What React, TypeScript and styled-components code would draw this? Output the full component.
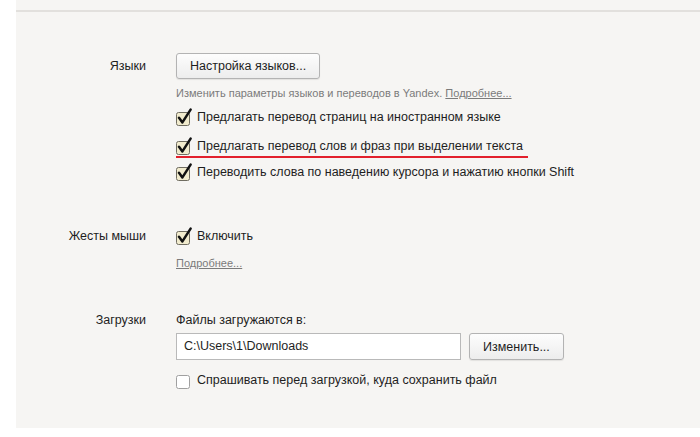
import React from 'react';
import styled, { createGlobalStyle } from 'styled-components';

const GlobalStyle = createGlobalStyle`
    html, body {
        margin: 0;
        padding: 0;
        background: #ffffff;
    }
    body {
        font-family: "Liberation Sans", Arial, sans-serif;
        font-size: 12.5px;
        color: #1e1e1e;
    }
`;

const Page = styled.div`
    width: 700px;
    height: 437px;
    background: #ffffff;
    overflow: hidden;
`;

const Panel = styled.div`
    margin-left: 16px;
    height: 428px;
    background: #f6f5f3;
    padding-top: 10px;
    box-sizing: border-box;
`;

const Rule = styled.div`
    height: 2px;
    background: #e2e0dd;
`;

const Sections = styled.div`
    display: flex;
    flex-direction: column;
    padding-top: 41px;
`;

const Section = styled.section<{ $gap?: number }>`
    display: grid;
    grid-template-columns: 130px 1fr;
    column-gap: 30px;
    margin-top: ${(p) => p.$gap ?? 0}px;
`;

const Label = styled.div<{ $height: number }>`
    text-align: right;
    line-height: ${(p) => p.$height}px;
    height: ${(p) => p.$height}px;
    color: #1e1e1e;
`;

const Content = styled.div`
    display: flex;
    flex-direction: column;
    align-items: flex-start;
`;

const Button = styled.button<{ $height?: number }>`
    height: ${(p) => p.$height ?? 26}px;
    padding: 0 13px;
    font-family: inherit;
    font-size: 12.5px;
    color: #1e1e1e;
    background: linear-gradient(#fdfdfd, #ededed);
    border: 1px solid #b3b3b3;
    border-radius: 3px;
    box-shadow: 0 1px 1px rgba(0, 0, 0, 0.08);
`;

const Hint = styled.div`
    margin-top: 7px;
    font-size: 11px;
    line-height: 14px;
    color: #7b7b7b;
`;

const MoreLink = styled.a<{ $gap?: number }>`
    font-size: 11px;
    line-height: 14px;
    color: #7b7b7b;
    text-decoration: underline;
    margin-top: ${(p) => p.$gap ?? 0}px;
`;

const CheckList = styled.div<{ $gap?: number }>`
    display: flex;
    flex-direction: column;
    gap: 7px;
    margin-top: ${(p) => p.$gap ?? 0}px;
`;

const CheckRow = styled.label<{ $marked?: boolean }>`
    display: flex;
    align-items: center;
    gap: 5px;
    height: 20px;
    width: fit-content;
    padding-right: ${(p) => (p.$marked ? 5 : 0)}px;
    border-bottom: ${(p) => (p.$marked ? '2px solid #e2202c' : 'none')};
    margin: ${(p) => (p.$marked ? '2px 0 -3px' : '0')};
    color: #1e1e1e;
`;

const Caption = styled.div`
    line-height: 20px;
`;

const PathRow = styled.div`
    display: flex;
    gap: 8px;
    margin-top: 3px;
`;

const PathInput = styled.div`
    width: 276px;
    height: 25px;
    line-height: 25px;
    padding-left: 7px;
    background: #ffffff;
    border: 1px solid #b9b9b9;
    color: #1e1e1e;
`;

const Check: React.FC<{ checked?: boolean }> = ({ checked }) => (
    <svg width="16" height="18" viewBox="0 0 16 18">
        <rect
            x="0.5"
            y="4.5"
            width="13"
            height="13"
            rx="2"
            fill={checked ? '#f1ebcd' : '#ffffff'}
            stroke={checked ? '#6f6c60' : '#a0a0a0'}
        />
        {checked && (
            <path
                d="M3 9.8 L6.4 14.4 L14.6 1.6"
                fill="none"
                stroke="#111111"
                strokeWidth="2.5"
                strokeLinecap="round"
                strokeLinejoin="round"
            />
        )}
    </svg>
);

export default function App() {
    return (
        <Page>
            <GlobalStyle />
            <Panel>
                <Rule />
                <Sections>
                    <Section>
                        <Label $height={26}>Языки</Label>
                        <Content>
                            <Button>Настройка языков...</Button>
                            <Hint>
                                Изменить параметры языков и переводов в Yandex.{' '}
                                <MoreLink>Подробнее...</MoreLink>
                            </Hint>
                            <CheckList $gap={7}>
                                <CheckRow>
                                    <Check checked />
                                    <Caption>Предлагать перевод страниц на иностранном языке</Caption>
                                </CheckRow>
                                <CheckRow $marked>
                                    <Check checked />
                                    <Caption>Предлагать перевод слов и фраз при выделении текста</Caption>
                                </CheckRow>
                                <CheckRow>
                                    <Check checked />
                                    <Caption>Переводить слова по наведению курсора и нажатию кнопки Shift</Caption>
                                </CheckRow>
                            </CheckList>
                        </Content>
                    </Section>
                    <Section $gap={44}>
                        <Label $height={20}>Жесты мыши</Label>
                        <Content>
                            <CheckRow>
                                <Check checked />
                                <Caption>Включить</Caption>
                            </CheckRow>
                            <MoreLink $gap={10}>Подробнее...</MoreLink>
                        </Content>
                    </Section>
                    <Section $gap={40}>
                        <Label $height={20}>Загрузки</Label>
                        <Content>
                            <Caption>Файлы загружаются в:</Caption>
                            <PathRow>
                                <PathInput>C:\Users\1\Downloads</PathInput>
                                <Button $height={27}>Изменить...</Button>
                            </PathRow>
                            <CheckList $gap={10}>
                                <CheckRow>
                                    <Check />
                                    <Caption>Спрашивать перед загрузкой, куда сохранить файл</Caption>
                                </CheckRow>
                            </CheckList>
                        </Content>
                    </Section>
                </Sections>
            </Panel>
        </Page>
    );
}
